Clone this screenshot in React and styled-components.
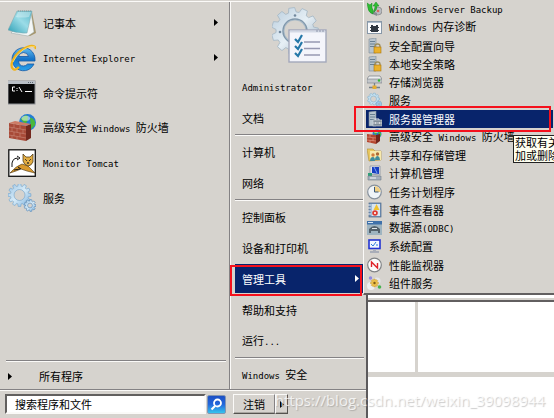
import React from 'react';
import styled, { createGlobalStyle, css } from 'styled-components';

const face = '#d6d3ce';
const shade = '#848284';
const light = '#fbfaf8';
const navy = '#08246b';
const red = '#f5101c';

const cjk = '"Noto Sans CJK SC", sans-serif';

const GlobalStyle = createGlobalStyle`
  * {
    box-sizing: border-box;
  }

  body {
    margin: 0;
    overflow: hidden;
    background: #fff;
    color: #000;
    font: 11px/14px ${cjk};
  }

  ul {
    list-style: none;
    margin: 0;
    padding: 0;
  }

  button,
  input {
    font: inherit;
    color: inherit;
    margin: 0;
  }

  svg {
    display: block;
    flex: none;
  }
`;

const Screen = styled.div`
  position: relative;
  display: flex;
  min-height: 100vh;
`;

const StartMenu = styled.nav`
  flex: 0 0 368px;
  display: flex;
  flex-direction: column;
  background: ${face};
  border-right: 2px solid #5c5a5c;
`;

const Panes = styled.div`
  display: flex;
  margin-top: 1px;
  border-top: 1px solid ${light};
`;

const Programs = styled.div`
  flex: 0 0 231px;
  display: flex;
  flex-direction: column;
  justify-content: space-between;
  padding-top: 3px;
  border-right: 1px solid ${light};
  box-shadow: inset -1px 0 0 ${shade};
`;

const Places = styled.div`
  flex: 1;
  padding: 0 2px 0 4px;
`;

const Rule = styled.hr`
  height: 2px;
  margin: ${({ $inset }) => ($inset ? '0 4px 0 6px' : '1px 0 0')};
  border: 0;
  border-top: 1px solid ${shade};
  border-bottom: 1px solid ${light};
`;

const itemReset = css`
  display: flex;
  align-items: center;
  width: 100%;
  padding: 0;
  border: 0;
  background: none;
  text-align: left;
  white-space: nowrap;
`;

const ProgramButton = styled.button`
  ${itemReset};
  gap: 7px;
  height: 35px;
  padding: 0 12px 0 8px;
`;

const AllPrograms = styled.button`
  ${itemReset};
  gap: 27px;
  height: 28px;
  padding-left: 8px;
`;

const PlaceItem = styled.li`
  padding: 1px 0;
`;

const PlaceButton = styled.button`
  ${itemReset};
  height: 29px;
  padding: 0 5px 0 7px;
  background: ${({ $active }) => ($active ? navy : 'none')};
  color: ${({ $active }) => ($active ? '#fff' : '#000')};
`;

const Caption = styled.span`
  flex: 1;
`;

const Latin = styled.span`
  font-family: 'DejaVu Sans Mono', monospace;
  font-size: 9px;
  white-space: pre;
`;

const UserPicture = styled.div`
  display: flex;
  justify-content: center;
  height: 69px;
  padding-top: 3px;
`;

const Footer = styled.form`
  flex: 1;
  display: flex;
  align-items: flex-start;
  padding: 3px 0 0 5px;
  border-top: 1px solid ${light};
  box-shadow: 0 -1px 0 ${shade};
`;

const SearchBox = styled.input`
  width: 201px;
  height: 20px;
  padding: 0 8px;
  border: 2px solid ${light};
  border-top-color: #62605f;
  border-left-color: #62605f;
  border-radius: 0;
  background: #fff;
  outline: 0;
`;

const SearchButton = styled.button`
  width: 19px;
  height: 19px;
  margin: 1px 7px 0 1px;
  padding: 2px;
  border: 1px solid #8195b4;
  border-radius: 2px;
  background: linear-gradient(#1c50c4, #2468dc 50%, #35c4ee);
`;

const RaisedButton = styled.button`
  display: flex;
  align-items: center;
  justify-content: center;
  width: ${({ $narrow }) => ($narrow ? '13px' : '42px')};
  height: 20px;
  padding: 0;
  border: 1px solid ${light};
  border-right-color: ${({ $narrow }) => ($narrow ? '#55534f' : shade)};
  border-bottom-color: #55534f;
  background: ${face};
  box-shadow: inset 0 -1px 0 #a9a6a1;
`;

const BackWindow = styled.main`
  flex: 1;
  display: flex;
  flex-direction: column;
  padding-top: 298px;
`;

const BackHeader = styled.div`
  height: 4px;
  border-top: 2px solid ${face};
  border-bottom: 2px solid #625f60;
`;

const BackGrid = styled.div`
  display: grid;
  grid-template-columns: 50px 1fr;
  height: 75px;
  border-bottom: 5px solid ${face};
`;

const BackCell = styled.div`
  border-right: ${({ $divided }) => ($divided ? `3px solid ${face}` : '0')};
`;

const Flyout = styled.ul`
  position: absolute;
  top: 0;
  left: 363px;
  right: 0;
  min-height: 295px;
  display: flex;
  flex-direction: column;
  justify-content: space-between;
  padding: 0 1px 1px 2px;
  background: ${face};
  border-left: 1px solid ${light};
  border-bottom: 2px solid #625f60;
`;

const ToolButton = styled.button`
  ${itemReset};
  gap: 7px;
  height: 18px;
  padding-left: 1px;
  background: ${({ $active }) => ($active ? navy : 'none')};
  color: ${({ $active }) => ($active ? '#fff' : '#000')};
`;

const Tooltip = styled.div`
  position: absolute;
  top: 135px;
  left: 513px;
  right: 0;
  overflow: hidden;
  padding-left: 1px;
  border: 1px solid #222;
  border-right: 0;
  background: #fffff0;
  line-height: 13px;
  white-space: nowrap;
`;

const Marker = styled.div`
  position: absolute;
  border: 2px solid ${red};
  pointer-events: none;
`;

const PlaceMarker = styled(Marker)`
  top: 265px;
  left: 230px;
  width: 132px;
  height: 31px;
`;

const ToolMarker = styled(Marker)`
  top: 106px;
  left: 354px;
  right: 3px;
  height: 26px;
`;

const Watermark = styled.div`
  position: absolute;
  right: 9px;
  bottom: 8px;
  color: rgba(255, 255, 255, 0.75);
  font: 15px/20px 'Open Sans', sans-serif;
  text-shadow: 1px 1px 1px rgba(120, 120, 120, 0.4);
  pointer-events: none;
`;

const Label = ({ text }) => (
  <Caption>
    {text
      .split(/([\x20-\x7e]+)/)
      .filter(Boolean)
      .map((part, i) =>
        /^[\x20-\x7e]/.test(part) ? <Latin key={i}>{part}</Latin> : part
      )}
  </Caption>
);

const Arrow = () => (
  <svg width="4" height="7" viewBox="0 0 4 7" aria-hidden="true">
    <path d="M0 0L4 3.5L0 7Z" fill="currentColor" />
  </svg>
);

const gear = (cx, cy, outer, inner, teeth) => {
  const step = (Math.PI * 2) / teeth;
  const points = [];
  for (let i = 0; i < teeth; i += 1) {
    [[-0.36, inner], [-0.22, outer], [0.22, outer], [0.36, inner]].forEach(
      ([offset, r]) => {
        const a = (i + offset) * step;
        points.push(
          `${(cx + r * Math.cos(a)).toFixed(2)} ${(cy + r * Math.sin(a)).toFixed(2)}`
        );
      }
    );
  }
  return `M${points.join('L')}Z`;
};

const ring = (cx, cy, r) =>
  `M${cx - r} ${cy}a${r} ${r} 0 1 0 ${r * 2} 0a${r} ${r} 0 1 0 ${-r * 2} 0Z`;

const Big = ({ children }) => (
  <svg width="28" height="28" viewBox="0 0 28 28" aria-hidden="true">
    {children}
  </svg>
);

const Small = ({ children }) => (
  <svg width="15" height="16" viewBox="0 0 15 16" aria-hidden="true">
    {children}
  </svg>
);

const NotepadIcon = () => (
  <Big>
    <defs>
      <linearGradient id="notepad" x1="0" y1="1" x2="1" y2="0">
        <stop offset="0" stopColor="#2d9fb5" />
        <stop offset="0.55" stopColor="#9bdce7" />
        <stop offset="1" stopColor="#5ab8ca" />
      </linearGradient>
    </defs>
    <path d="M24 3L28 24L22 27L18 26Z" fill="#a6966b" />
    <path d="M23 3L26 23L20 27L3 24Z" fill="#f4f7f6" stroke="#93a3a5" strokeWidth=".5" />
    <path d="M9 2L24 2L19 24Q9 25 0 21Z" fill="url(#notepad)" stroke="#7fa4aa" strokeWidth=".5" />
    <path d="M10 3L23 3L21 8Q13 9 8 8Z" fill="#fff" opacity=".35" />
    <path d="M10 2H24" stroke="#8b979a" strokeWidth="1" strokeDasharray="1 1" />
  </Big>
);

const ExplorerIcon = () => (
  <Big>
    <defs>
      <linearGradient id="explorer" x1="0" y1="0" x2="0" y2="1">
        <stop offset="0" stopColor="#64bdf0" />
        <stop offset="0.5" stopColor="#1473c8" />
        <stop offset="1" stopColor="#2aa3ec" />
      </linearGradient>
    </defs>
    <path
      d="M27 16A11.5 11.5 0 1 0 26 20H19.5Q18 22 15.5 22Q11 22 10.5 17H27ZM10.5 12.5Q11.5 8.5 15.5 8.5Q19.5 8.5 20.5 12.5Z"
      fill="url(#explorer)"
      stroke="#1558a4"
      strokeWidth=".8"
      fillRule="evenodd"
    />
    <path
      d="M28 5Q27 0 19 3Q9 7 5 16Q2 22 5 25Q7 27 11 23"
      fill="none"
      stroke="#f0b31a"
      strokeWidth="2.2"
    />
    <path d="M27 3Q23 1 15 6Q8 11 5 18" fill="none" stroke="#ffe27c" strokeWidth=".8" />
  </Big>
);

const PromptIcon = () => (
  <Big>
    <rect x="0" y="2" width="27" height="23" fill="#080808" stroke="#8d9094" />
    <rect x="0" y="2" width="27" height="3" fill="#b9bfc6" />
    <path d="M20 3.5H26" stroke="#5d6671" strokeDasharray="1 1" />
    <g fill="none" stroke="#fff" strokeWidth="1">
      <path d="M7 8H4.5V12H7M9 9V10M9 11V12M11 8L14 13M17 12.5H24" />
    </g>
  </Big>
);

const Globe = ({ x, y, r }) => (
  <g>
    <circle cx={x} cy={y} r={r} fill="#247cd4" />
    <path
      d={`M${x - r * 0.8} ${y - r * 0.4}Q${x - r * 0.2} ${y - r} ${x} ${y - r * 0.8}Q${x + r * 0.2} ${y - r * 0.2} ${x - r * 0.3} ${y + r * 0.2}ZM${x + r * 0.3} ${y - r * 0.6}Q${x + r} ${y - r * 0.4} ${x + r * 0.9} ${y + r * 0.3}L${x + r * 0.4} ${y + r * 0.8}Z`}
      fill="#48b83c"
    />
    <ellipse cx={x - r * 0.2} cy={y - r * 0.5} rx={r * 0.5} ry={r * 0.3} fill="#fff" opacity=".5" />
  </g>
);

const FirewallIcon = () => (
  <Big>
    <Globe x={19.5} y={8.5} r={8.5} />
    <path d="M1 9L18 12V27L1 24Z" fill="#a84a38" />
    <path d="M18 12L23 10V24L18 27Z" fill="#74291f" />
    <path d="M1 9L7 7L23 10L18 12Z" fill="#cd7c66" />
    <g stroke="#c98a7a" strokeWidth=".6" fill="none">
      <path d="M1 13L18 16M1 17L18 20M1 21L18 24M6 10V14M12 11V15M4 13.5V17.5M9 14.5V18.5M15 15.5V19.5M6 18V22M12 19V23M4 21.5V24.5M9 22.5V25.5" />
    </g>
  </Big>
);

const TomcatIcon = () => (
  <Big>
    <rect x=".8" y=".8" width="26.500" height="26.500" fill="#fff" stroke="#111" strokeWidth="1.3" />
    <path d="M2 24Q8 17 14 15L20 17L27 24L19 22L13 20L8 22Z" fill="#d99a2e" stroke="#4a3410" strokeWidth=".6" />
    <path d="M15 5L18 8H22L25 5V13Q23 17 20 17Q16 16 15 12Z" fill="#e2ad43" stroke="#3c2c10" strokeWidth=".7" />
    <path d="M17 10L19 12M23 10L21 12M19 14H21M20 13V15" stroke="#222" strokeWidth=".8" />
    <path d="M4 18Q3 9 10 9M9 7L12 9L9 11M6 21L12 20M10 18L13 20" fill="none" stroke="#151515" />
  </Big>
);

const GearFill = () => (
  <defs>
    <linearGradient id="gears" x1="0" y1="0" x2="1" y2="1">
      <stop offset="0" stopColor="#9ac3e4" />
      <stop offset="0.5" stopColor="#d8ecf8" />
      <stop offset="1" stopColor="#75addc" />
    </linearGradient>
  </defs>
);

const ServicesIcon = () => (
  <Big>
    <GearFill />
    <path
      d={gear(11.5, 11, 11.5, 9, 12) + ring(11.5, 11, 5.5)}
      fill="url(#gears)"
      fillRule="evenodd"
      stroke="#6fa2cd"
      strokeWidth=".6"
    />
    <path
      d={gear(22, 21.5, 6, 4.5, 9) + ring(22, 21.5, 2.4)}
      fill="url(#gears)"
      fillRule="evenodd"
      stroke="#5686b5"
      strokeWidth=".6"
    />
  </Big>
);

const AdminToolsIcon = () => (
  <svg width="56" height="60" viewBox="0 0 56 60" aria-hidden="true">
    <defs>
      <linearGradient id="metal" x1="0" y1="0" x2="1" y2="1">
        <stop offset="0" stopColor="#b9cddd" />
        <stop offset="0.5" stopColor="#e6eff5" />
        <stop offset="1" stopColor="#94aabd" />
      </linearGradient>
    </defs>
    <path
      d={gear(23, 26, 23.5, 19, 11) + ring(23, 26, 11)}
      fill="url(#metal)"
      fillRule="evenodd"
      stroke="#a3b6c4"
      strokeWidth=".8"
    />
    <circle cx="23" cy="26" r="12" fill="none" stroke="#8198ac" strokeWidth="1.5" />
    <g fill="#71889d">
      <circle cx="23" cy="10.500" r="1.300" />
      <circle cx="8" cy="27" r="1.300" />
    </g>
    <rect x="17" y="25" width="37" height="32" fill="#f4f5fb" stroke="#a3a8bb" strokeWidth="1.400" />
    <path d="M18 26.500H53" stroke="#d3d9e5" strokeWidth="2" />
    <path d="M44 26H52" stroke="#8f97ac" strokeDasharray="2 1" />
    <path d="M32 37H48M32 43.500H48M32 50H48" stroke="#9799b2" strokeWidth="1.500" />
    <path
      d="M23 34L26 37L30 30M23 41L26 44L30 37M23 48L26 51L30 44"
      fill="none"
      stroke="#2578a8"
      strokeWidth="2.200"
    />
  </svg>
);

const BackupIcon = () => (
  <Small>
    <circle cx="11" cy="10" r="4" fill="#b9bcc2" stroke="#777" strokeWidth=".6" />
    <circle cx="11" cy="10" r="1.3" fill="#d5655d" />
    <path d="M3 9L10 12V15L3 12Z" fill="#888d92" />
    <path d="M0 2L3 4L5 2V7Q7 9 6 13Q1 11 1 7ZM6 5L9 1L12 5H10Q10 9 7 11Q8 7 8 5Z" fill="#2fbd32" stroke="#158b22" strokeWidth=".5" />
  </Small>
);

const MemoryIcon = () => (
  <Small>
    <rect x=".5" y="2.5" width="14" height="12" fill="#fafbfd" stroke="#8898a8" />
    <path d="M1 3.5H14" stroke="#aebccb" />
    <path d="M4 6H6V7H9V6H11V13H4Z" fill="#303842" />
    <path d="M3 8.5H12M3 11.5H12" stroke="#303842" strokeDasharray="1 7" />
  </Small>
);

const Tower = () => (
  <g>
    <path d="M2 1L9 0V15H2Z" fill="#b7c4ce" stroke="#7c8c99" strokeWidth=".6" />
    <path d="M3 3.5H8M3 6H8M3 8.5H8" stroke="#5f788b" strokeWidth=".9" />
  </g>
);

const LockedServerIcon = () => (
  <Small>
    <Tower />
    <path d="M8 10V8Q8 6 10.5 6Q13 6 13 8V10" fill="none" stroke="#9a8c5c" strokeWidth="1.3" />
    <rect x="7" y="9" width="7" height="6" fill="#eab12c" stroke="#a87510" strokeWidth=".6" />
  </Small>
);

const StorageIcon = () => (
  <Small>
    <path d="M2 2H13L15 5V8H0V5Z" fill="#eceef0" stroke="#777d83" strokeWidth=".7" />
    <path d="M0 5H15V9H0Z" fill="#c3c7cb" stroke="#777d83" strokeWidth=".6" />
    <circle cx="12" cy="6.5" r="1.2" fill="#2fbb32" />
    <path d="M7.5 9V12M2 13.5H13" stroke="#75808a" strokeWidth="1.3" />
    <rect x="5.5" y="11.5" width="4" height="3.5" fill="#e5ad32" />
  </Small>
);

const SmallGearsIcon = () => (
  <Small>
    <path d={gear(6.5, 7, 6, 4.8, 9) + ring(6.5, 7, 3)} fill="#c3dfef" stroke="#82b0cf" strokeWidth=".6" fillRule="evenodd" />
    <path d={gear(12, 12, 3, 2.3, 7) + ring(12, 12, 1)} fill="#a7cfec" stroke="#6598c0" strokeWidth=".5" fillRule="evenodd" />
  </Small>
);

const ServerManagerIcon = () => (
  <Small>
    <Tower />
    <path d="M8 9V8H12V9" fill="none" stroke="#e0e4e8" />
    <rect x="6" y="9" width="9" height="6" fill="#808d99" stroke="#d1d7dd" strokeWidth=".6" />
    <path d="M6 12H15M8.5 11V13M12.5 11V13" stroke="#e5e8eb" strokeWidth=".7" />
  </Small>
);

const SmallFirewallIcon = () => (
  <Small>
    <Globe x={10} y={5} r={4.5} />
    <path d="M0 5L9 6V15L0 13Z" fill="#b4452f" />
    <path d="M9 6L13 5V12L9 15Z" fill="#73251b" />
    <path d="M0 8L9 9M0 11L9 12M3 5V8M6 9V12M3 11V14" stroke="#e2a08e" strokeWidth=".6" />
  </Small>
);

const SharedFolderIcon = () => (
  <Small>
    <path d="M0 2H6L8 4H14V13L2 14Z" fill="#e9c860" stroke="#b08d30" strokeWidth=".6" />
    <path d="M3 4H14V13H3Z" fill="#f7e9ac" />
    <circle cx="6" cy="8" r="1.7" fill="#cf7c3d" />
    <circle cx="10.5" cy="7" r="1.7" fill="#ac6a35" />
    <path d="M3 14Q3 10 6 10Q8 10 8 14ZM8 13Q8 9 11 9Q13 10 13 13Z" fill="#3f8e9c" />
  </Small>
);

const ComputerIcon = () => (
  <Small>
    <path d="M3 1H13V10L3 9Z" fill="#dfe4ea" stroke="#7f8b99" strokeWidth=".7" />
    <path d="M5 2H12V9L5 8Z" fill="#173fc2" />
    <path d="M7 2L10 8" stroke="#7ca7f2" />
    <path d="M1 8H5V12H1Z" fill="#2f9e79" />
    <path d="M1 11H14V15H1Z" fill="#a4b0bd" stroke="#6f7c89" strokeWidth=".6" />
    <path d="M3 13H9" stroke="#f4f6f8" />
  </Small>
);

const ClockIcon = () => (
  <Small>
    <circle cx="7.5" cy="8" r="6.8" fill="#f0f4f8" stroke="#87919d" strokeWidth="1.2" />
    <path d="M7.5 8V2A6 6 0 0 1 13.5 8Z" fill="#f1cf83" />
    <path d="M7.5 3V8H11.5" fill="none" stroke="#3a5878" />
  </Small>
);

const EventIcon = () => (
  <Small>
    <rect x="2" y="1" width="12" height="14" fill="#7396bd" stroke="#4d6886" strokeWidth=".7" />
    <rect x="4.5" y="2" width="8.5" height="12" fill="#d8e5f0" />
    <path d="M1 3H4M1 6H4M1 9H4M1 12H4" stroke="#e9edf2" />
    <path d="M9.5 2L12.5 8H6.5Z" fill="#f2c22c" />
    <circle cx="8" cy="11" r="2.8" fill="#dd3a31" />
    <path d="M7 10L9 12M9 10L7 12" stroke="#fff" strokeWidth=".8" />
  </Small>
);

const DataSourceIcon = () => (
  <Small>
    <rect x="0" y="1" width="15" height="14" fill="#9fb4c0" />
    <rect x="0" y="1" width="15" height="3.5" fill="#3f71aa" />
    <path d="M1 2.5H6" stroke="#d5e4f2" />
    <path d="M2 9Q7.5 3 13 9V13H11V11H4V13H2Z" fill="#53616b" />
    <path d="M5 8.5H10" stroke="#e1e7ea" />
  </Small>
);

const MonitorIcon = () => (
  <Small>
    <rect x="2" y="2" width="11" height="8.5" fill="#f2f7ff" stroke="#2435d2" strokeWidth="1.6" />
    <path d="M4 6L6 8L9 4M9 7H11" fill="none" stroke="#2b7adc" />
    <path d="M6 11.5H9V13H12V15H3V13H6Z" fill="#a9adb8" />
  </Small>
);

const PerformanceIcon = () => (
  <Small>
    <circle cx="7.5" cy="8" r="6.8" fill="#fcfcfc" stroke="#7f8285" strokeWidth="1.2" />
    <path d="M4.5 10V5L10.5 11V6" fill="none" stroke="#e0242b" strokeWidth="1.4" />
  </Small>
);

const ComponentIcon = () => (
  <Small>
    <circle cx="4" cy="11" r="4" fill="#eceef0" />
    <circle cx="10" cy="6" r="3.5" fill="#e4e6ea" />
    <path d={gear(7.5, 8, 4, 3, 8)} fill="#eec14a" stroke="#c89828" strokeWidth=".5" />
    <circle cx="7.5" cy="8" r="1.2" fill="#7d5b17" />
    <circle cx="3.5" cy="3" r="1.7" fill="#8f8ae0" />
    <circle cx="12.5" cy="12" r="1.800" fill="#48b350" />
  </Small>
);

const programs = [
  { text: '记事本', icon: NotepadIcon, more: true },
  { text: 'Internet Explorer', icon: ExplorerIcon, more: true },
  { text: '命令提示符', icon: PromptIcon },
  { text: '高级安全 Windows 防火墙', icon: FirewallIcon },
  { text: 'Monitor Tomcat', icon: TomcatIcon },
  { text: '服务', icon: ServicesIcon },
];

const places = [
  ['Administrator', '文档'],
  ['计算机', '网络'],
  ['控制面板', '设备和打印机', '管理工具', '帮助和支持', '运行...'],
  ['Windows 安全'],
];

const tools = [
  ['Windows Server Backup', BackupIcon],
  ['Windows 内存诊断', MemoryIcon],
  ['安全配置向导', LockedServerIcon],
  ['本地安全策略', LockedServerIcon],
  ['存储浏览器', StorageIcon],
  ['服务', SmallGearsIcon],
  ['服务器管理器', ServerManagerIcon],
  ['高级安全 Windows 防火墙', SmallFirewallIcon],
  ['共享和存储管理', SharedFolderIcon],
  ['计算机管理', ComputerIcon],
  ['任务计划程序', ClockIcon],
  ['事件查看器', EventIcon],
  ['数据源(ODBC)', DataSourceIcon],
  ['系统配置', MonitorIcon],
  ['性能监视器', PerformanceIcon],
  ['组件服务', ComponentIcon],
];

const openPlace = '管理工具';
const openTool = '服务器管理器';

const App = () => (
  <>
    <GlobalStyle />
    <Screen>
      <StartMenu>
        <Panes>
          <Programs>
            <ul>
              {programs.map(({ text, icon: Icon, more }) => (
                <li key={text}>
                  <ProgramButton type="button">
                    <Icon />
                    <Label text={text} />
                    {more && <Arrow />}
                  </ProgramButton>
                </li>
              ))}
            </ul>
            <div>
              <Rule $inset />
              <AllPrograms type="button">
                <Arrow />
                所有程序
              </AllPrograms>
            </div>
          </Programs>
          <Places>
            <UserPicture>
              <AdminToolsIcon />
            </UserPicture>
            {places.map((group, i) => (
              <React.Fragment key={group[0]}>
                {i > 0 && <Rule />}
                <ul>
                  {group.map(text => (
                    <PlaceItem key={text}>
                      <PlaceButton type="button" $active={text === openPlace}>
                        <Label text={text} />
                        {text === openPlace && <Arrow />}
                      </PlaceButton>
                    </PlaceItem>
                  ))}
                </ul>
              </React.Fragment>
            ))}
          </Places>
        </Panes>
        <Footer onSubmit={e => e.preventDefault()}>
          <SearchBox aria-label="搜索程序和文件" defaultValue="搜索程序和文件" />
          <SearchButton aria-label="搜索">
            <svg width="13" height="13" viewBox="0 0 13 13" aria-hidden="true">
              <circle cx="7.5" cy="5" r="3.5" fill="none" stroke="#fff" strokeWidth="1.8" />
              <path d="M5 8L1.5 11.5" stroke="#fff" strokeWidth="2.2" />
            </svg>
          </SearchButton>
          <RaisedButton type="button">注销</RaisedButton>
          <RaisedButton type="button" $narrow aria-label="更多选项">
            <Arrow />
          </RaisedButton>
        </Footer>
      </StartMenu>
      <BackWindow>
        <BackHeader />
        <BackGrid>
          <BackCell $divided />
          <BackCell />
        </BackGrid>
      </BackWindow>
      <Flyout>
        {tools.map(([text, Icon]) => (
          <li key={text}>
            <ToolButton type="button" $active={text === openTool}>
              <Icon />
              <Label text={text} />
            </ToolButton>
          </li>
        ))}
      </Flyout>
      <PlaceMarker />
      <ToolMarker />
      <Tooltip>
        获取有关
        <br />
        加或删除
      </Tooltip>
      <Watermark>https://blog.csdn.net/weixin_39098944</Watermark>
    </Screen>
  </>
);

export default App;
